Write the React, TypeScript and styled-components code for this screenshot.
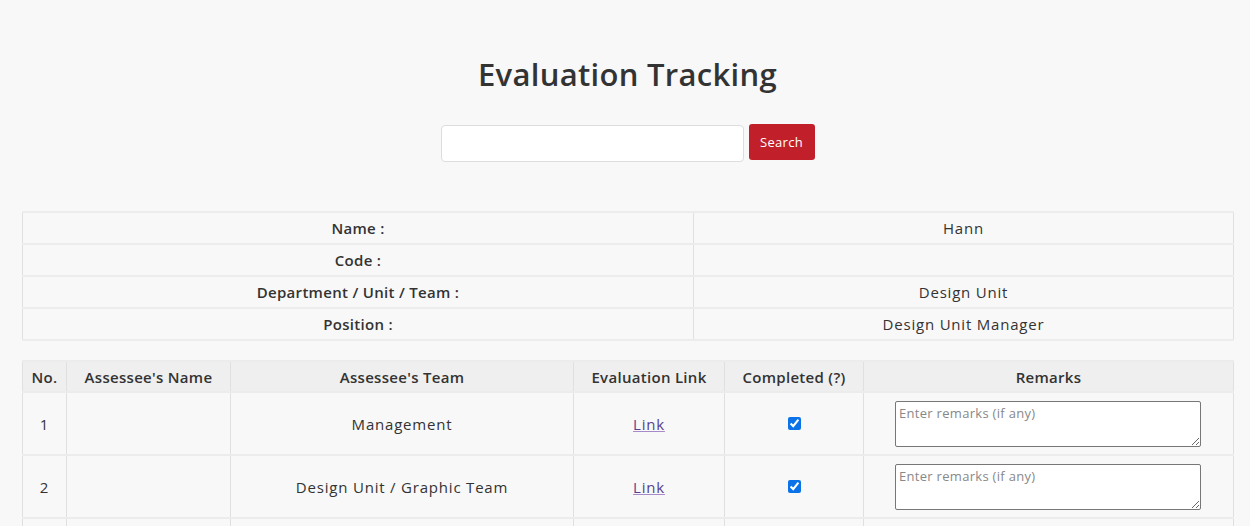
import React from 'react';
import styled, { createGlobalStyle } from 'styled-components';

const GlobalStyle = createGlobalStyle`
  html, body {
    margin: 0;
    padding: 0;
    background: #f8f8f8;
    font-family: 'Open Sans', 'Liberation Sans', sans-serif;
    color: #333;
  }
`;

const Page = styled.div`
  padding: 52px 17px 0 22px;
`;

const Title = styled.h1`
  margin: 0;
  text-align: center;
  font-size: 31px;
  font-weight: 600;
  line-height: 44px;
  color: #333;
  letter-spacing: 0.3px;
`;

const SearchBar = styled.form`
  display: flex;
  justify-content: center;
  align-items: flex-start;
  gap: 5px;
  margin: 28px 0 49px 0;
`;

const SearchInput = styled.input`
  box-sizing: border-box;
  width: 303px;
  height: 37px;
  margin-top: 1px;
  border: 1px solid #ddd;
  border-radius: 4px;
  background: #fff;
  outline: none;
`;

const SearchButton = styled.button`
  box-sizing: border-box;
  width: 66px;
  height: 36px;
  border: none;
  border-radius: 3px;
  background: #c1202a;
  color: #fff;
  font-family: inherit;
  font-size: 13px;
  letter-spacing: 0.3px;
`;

const Table = styled.table<{ $gap?: number }>`
  width: 1211px;
  border-collapse: collapse;
  table-layout: fixed;
  font-size: 15px;
  margin-bottom: ${({ $gap }) => $gap ?? 0}px;
`;

const Cell = styled.td<{ $bold?: boolean; $tall?: boolean; $left?: boolean }>`
  border-left: 1px solid #e0e0e0;
  border-right: 1px solid #e0e0e0;
  border-top: 2px solid #ececec;
  border-bottom: 2px solid #ececec;
  text-align: ${({ $left }) => ($left ? 'left' : 'center')};
  vertical-align: middle;
  padding: 0 6px;
  height: ${({ $tall }) => ($tall ? '61px' : '30px')};
  font-weight: ${({ $bold }) => ($bold ? 600 : 400)};
  letter-spacing: ${({ $bold }) => ($bold ? '0.3px' : '0.8px')};
  color: #333;
`;

const HeadCell = styled.th`
  border: 1px solid #e0e0e0;
  border-top: 2px solid #ececec;
  border-bottom: 2px solid #ececec;
  background: #efefef;
  height: 29px;
  padding: 0 6px;
  font-weight: 600;
  font-size: 15px;
  letter-spacing: 0.3px;
  text-align: center;
  color: #333;
  white-space: nowrap;
`;

const LinkText = styled.a`
  color: #5a3f8f;
  text-decoration: underline;
  text-decoration-color: #a78bc8;
`;

const Check = styled.input`
  width: 13px;
  height: 13px;
  margin: 0;
  accent-color: #0b72e7;
`;

const Remarks = styled.textarea`
  display: block;
  box-sizing: border-box;
  width: 306px;
  height: 46px;
  margin: 0 0 0 25px;
  padding: 2px 3px;
  border: 1px solid #777;
  border-radius: 2px;
  background: #fff;
  font-family: inherit;
  font-size: 13px;
  letter-spacing: 0.3px;
  color: #333;
  resize: vertical;
  &::placeholder {
    color: #888;
  }
`;

const info = [
  ['Name :', 'Hann'],
  ['Code :', ''],
  ['Department / Unit / Team :', 'Design Unit'],
  ['Position :', 'Design Unit Manager'],
];

const rows = [
  { no: 1, team: 'Management' },
  { no: 2, team: 'Design Unit / Graphic Team' },
  { no: 3, team: '' },
];

export default function App() {
  return (
    <Page>
      <GlobalStyle />
      <Title>Evaluation Tracking</Title>
      <SearchBar onSubmit={(e) => e.preventDefault()}>
        <SearchInput type="text" />
        <SearchButton type="submit">Search</SearchButton>
      </SearchBar>

      <Table $gap={19}>
        <colgroup>
          <col style={{ width: 671 }} />
          <col style={{ width: 540 }} />
        </colgroup>
        <tbody>
          {info.map(([label, value]) => (
            <tr key={label}>
              <Cell $bold>{label}</Cell>
              <Cell>{value}</Cell>
            </tr>
          ))}
        </tbody>
      </Table>

      <Table>
        <colgroup>
          <col style={{ width: 44 }} />
          <col style={{ width: 164 }} />
          <col style={{ width: 343 }} />
          <col style={{ width: 151 }} />
          <col style={{ width: 139 }} />
          <col style={{ width: 370 }} />
        </colgroup>
        <thead>
          <tr>
            <HeadCell>No.</HeadCell>
            <HeadCell>Assessee's Name</HeadCell>
            <HeadCell>Assessee's Team</HeadCell>
            <HeadCell>Evaluation Link</HeadCell>
            <HeadCell>Completed (?)</HeadCell>
            <HeadCell>Remarks</HeadCell>
          </tr>
        </thead>
        <tbody>
          {rows.map((r) => (
            <tr key={r.no}>
              <Cell $tall>{r.no}</Cell>
              <Cell $tall />
              <Cell $tall>{r.team}</Cell>
              <Cell $tall>
                <LinkText href="#">Link</LinkText>
              </Cell>
              <Cell $tall>
                <Check type="checkbox" defaultChecked />
              </Cell>
              <Cell $tall $left>
                <Remarks placeholder="Enter remarks (if any)" />
              </Cell>
            </tr>
          ))}
        </tbody>
      </Table>
    </Page>
  );
}
